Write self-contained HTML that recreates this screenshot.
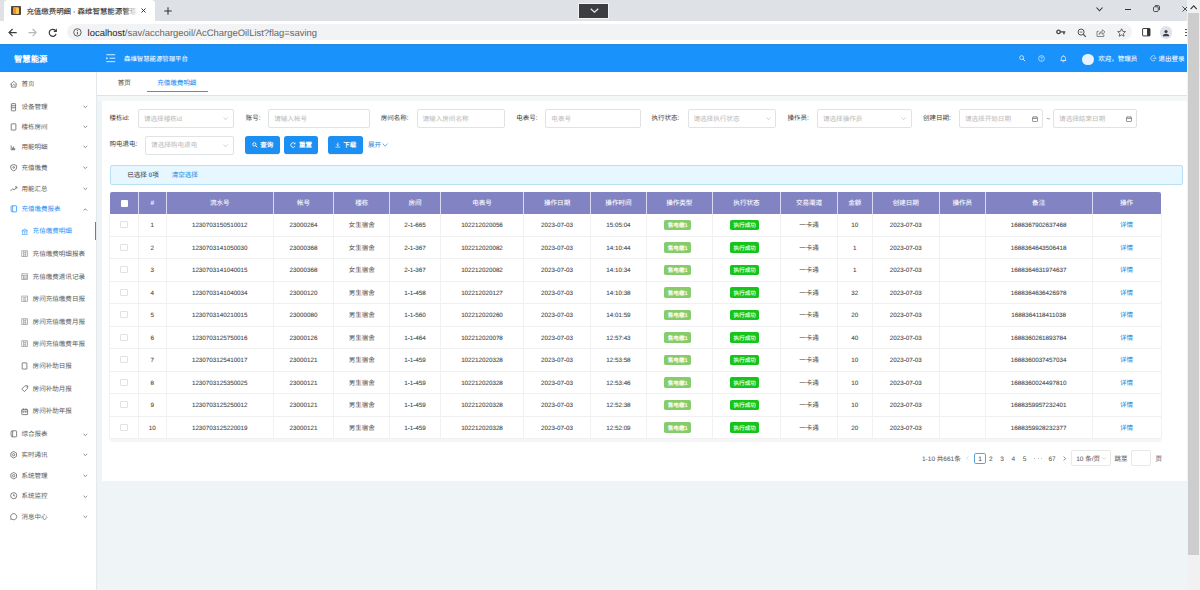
<!DOCTYPE html>
<html lang="zh-CN"><head><meta charset="utf-8"><title>充值缴费明细 · 森维智慧能源管理平台</title>
<style>
*{box-sizing:border-box;margin:0;padding:0}
html,body{width:1200px;height:590px;overflow:hidden;background:#eff5f6}
body{font-family:"Liberation Sans",sans-serif;font-size:6.56px;color:#555;position:relative;line-height:1;text-rendering:geometricPrecision}
.abs{position:absolute}
.t{line-height:10px;height:10px;white-space:nowrap}
svg{position:absolute;overflow:visible}
.ip{border:0.6px solid #e0e3e5;border-radius:2px;background:#fff}
.btn{border-radius:2.8px;background:#1c8ff2;box-shadow:0 0.6px 1px rgba(0,0,0,.08)}
.vl{width:0.6px;background:#f1f1f1}
.hl{height:0.6px;background:#f0f0f0}
.tg{border-radius:1.8px}
.cb{width:7.4px;height:7.4px;border:0.6px solid #e2e2e2;border-radius:1px;background:#fff}
</style></head>
<body>
<div class="abs" style="left:0.00px;top:0.00px;width:1187.00px;height:20.70px;background:#dee1e6"></div>
<div class="abs" style="left:3.50px;top:0.00px;width:151.00px;height:20.70px;background:#fff;border-radius:4px 4px 0 0"></div>
<div class="abs" style="left:11.40px;top:6.10px;width:9.50px;height:9.00px;background:#4a4640;border-radius:1px"></div>
<div class="abs" style="left:13.20px;top:7.30px;width:5.80px;height:6.60px;background:#f7941d;border-radius:1.2px"></div>
<div class="abs" style="left:16.20px;top:7.60px;width:2.60px;height:6.00px;background:#ffc54d;border-radius:0 1.2px 1.2px 0"></div>
<div class="abs t" id="tabtitle" style="left:26.40px;top:7px;font-size:7.45px;color:#333;-webkit-text-stroke:0.1px;width:111px;overflow:hidden;">充值缴费明细 · 森维智慧能源管理平台</div>
<div class="abs" style="left:124.00px;top:3.00px;width:13.00px;height:14.00px;background:linear-gradient(90deg,rgba(255,255,255,0),#fff)"></div>
<svg style="left:141.20px;top:8.20px" width="5" height="5" viewBox="0 0 10 10"><path d="M1 1L9 9M9 1L1 9" stroke="#333" stroke-width="1.9" fill="none"/></svg>
<svg style="left:163.60px;top:6.70px" width="8" height="8" viewBox="0 0 14 14"><path d="M7 0.5V13.5M0.5 7H13.5" stroke="#333" stroke-width="1.8" fill="none"/></svg>
<div class="abs" style="left:577.50px;top:3.20px;width:31.40px;height:15.40px;background:#3b3d40;border:0.6px solid #f4f4f4"></div>
<svg style="left:589.50px;top:8.20px" width="9" height="5" viewBox="0 0 18 10"><path d="M1.5 1.5L9 8.5L16.5 1.5" stroke="#eee" stroke-width="2.2" fill="none"/></svg>
<svg style="left:1095.70px;top:7.00px" width="7" height="4.5" viewBox="0 0 14 9"><path d="M1 1L7 7.5L13 1" stroke="#333" stroke-width="2.2" fill="none"/></svg>
<div class="abs" style="left:1124.60px;top:8.70px;width:6.80px;height:1.00px;background:#333"></div>
<svg style="left:1153.00px;top:5.40px" width="7" height="7" viewBox="0 0 14 14"><rect x="1" y="3.5" width="9.5" height="9.5" rx="2" stroke="#333" stroke-width="1.7" fill="none"/><path d="M4 1.2H10.5Q13 1.2 13 3.8V10" stroke="#333" stroke-width="1.7" fill="none"/></svg>
<svg style="left:1181.60px;top:5.60px" width="6" height="6" viewBox="0 0 12 12"><path d="M1 1L11 11M11 1L1 11" stroke="#333" stroke-width="1.7" fill="none"/></svg>
<div class="abs" style="left:0.00px;top:20.70px;width:1187.00px;height:23.50px;background:#fff"></div>
<div class="abs" style="left:66.50px;top:24.20px;width:1065.00px;height:15.80px;border-radius:8px;background:#f1f3f4"></div>
<svg style="left:7.90px;top:28.00px" width="9.2" height="9.2" viewBox="0 0 18 18"><path d="M17 9H2.5M9 2L2 9L9 16" stroke="#3c3c3c" stroke-width="2.3" fill="none"/></svg>
<svg style="left:27.70px;top:28.00px" width="9.2" height="9.2" viewBox="0 0 18 18"><path d="M1 9H15.5M9 2L16 9L9 16" stroke="#b4b7bb" stroke-width="2.3" fill="none"/></svg>
<svg style="left:47.90px;top:27.90px" width="9.6" height="9.6" viewBox="0 0 18 18"><path d="M15.2 11.2A6.6 6.6 0 1 1 13.6 4.3" stroke="#3c3c3c" stroke-width="2.3" fill="none"/><path d="M16.6 1V7.6H10z" fill="#3c3c3c"/></svg>
<svg style="left:73.00px;top:28.00px" width="8.8" height="8.8" viewBox="0 0 18 18"><circle cx="9" cy="9" r="7.6" stroke="#444" stroke-width="1.7" fill="none"/><path d="M9 8V13.3" stroke="#444" stroke-width="1.9"/><circle cx="9" cy="5.3" r="1.15" fill="#444"/></svg>
<div class="abs t" id="url" style="left:87.60px;top:29px;font-size:9.45px;color:#222;">localhost<span style="color:#666">/sav/acchargeoil/AcChargeOilList?flag=saving</span></div>
<svg style="left:1056.30px;top:29.00px" width="9.8" height="5.8" viewBox="0 0 19 11"><circle cx="5" cy="5.5" r="3.4" stroke="#444" stroke-width="2.6" fill="none"/><path d="M9 4.2H18V6.8H16.8V10H14V6.8H9z" fill="#444"/></svg>
<svg style="left:1076.60px;top:28.00px" width="9.6" height="9.6" viewBox="0 0 20 20"><circle cx="8.5" cy="8.5" r="6.3" stroke="#4a4a4a" stroke-width="2" fill="none"/><path d="M13 13L18.5 18.5" stroke="#4a4a4a" stroke-width="2.3"/><path d="M5.5 8.5H11.5" stroke="#555" stroke-width="1.6"/></svg>
<svg style="left:1096.30px;top:27.60px" width="9.8" height="9.2" viewBox="0 0 20 19"><path d="M5.5 7H2V17.5H16V13" stroke="#666" stroke-width="1.6" fill="none"/><path d="M6 13.5Q7 7.5 13 7V3.5L18.5 8.2L13 13V9.8Q8.5 10 6 13.5z" stroke="#666" stroke-width="1.5" fill="none" stroke-linejoin="round"/></svg>
<svg style="left:1116.80px;top:28.00px" width="9.2" height="8.8" viewBox="0 0 20 19"><path d="M10 1.6L12.5 7.2L18.6 7.8L14 11.9L15.3 17.9L10 14.8L4.7 17.9L6 11.9L1.4 7.8L7.5 7.2z" stroke="#444" stroke-width="1.7" fill="none" stroke-linejoin="round"/></svg>
<svg style="left:1141.60px;top:28.20px" width="8.6" height="8.4" viewBox="0 0 17 17"><rect x="1" y="1" width="15" height="15" rx="1" stroke="#333" stroke-width="1.9" fill="none"/><rect x="10" y="1" width="6" height="15" fill="#333"/></svg>
<div class="abs" style="left:1159.70px;top:26.00px;width:12.80px;height:12.80px;border-radius:6.4px;background:#dfe3ea"></div>
<svg style="left:1162.10px;top:28.60px" width="8" height="8" viewBox="0 0 16 16"><circle cx="8" cy="5" r="3.2" fill="#3c4043"/><path d="M1.5 14.5Q1.5 9.5 8 9.5T14.5 14.5z" fill="#3c4043"/></svg>
<div class="abs" style="left:1185.20px;top:28.60px;width:1.80px;height:1.60px;background:#444;border-radius:1px"></div>
<div class="abs" style="left:1185.20px;top:31.70px;width:1.80px;height:1.60px;background:#444;border-radius:1px"></div>
<div class="abs" style="left:1185.20px;top:34.80px;width:1.80px;height:1.60px;background:#444;border-radius:1px"></div>
<div class="abs" style="left:0.00px;top:44.00px;width:1187.00px;height:28.00px;background:#1992fc"></div>
<div class="abs" style="left:0.00px;top:44.00px;width:1187.00px;height:1.00px;background:#2a8ade"></div>
<div class="abs t" id="logo" style="left:14.00px;top:54px;font-size:8.4px;color:#fff;font-weight:bold;">智慧能源</div>
<svg style="left:105.50px;top:54.00px" width="9.5" height="8.4" viewBox="0 0 19 17"><path d="M0.5 1.5H18.5M7 8.5H18.5M0.5 15.5H18.5" stroke="#fff" stroke-width="1.7" fill="none"/><path d="M0.5 6L4 8.5L0.5 11z" fill="#fff"/></svg>
<div class="abs t" id="plat" style="left:124.00px;top:55px;font-size:6.4px;color:#fff;-webkit-text-stroke:0.05px;">森维智慧能源管理平台</div>
<svg style="left:1018.50px;top:55.30px" width="6.6" height="6.6" viewBox="0 0 14 14"><circle cx="5.6" cy="5.6" r="4.1" stroke="#e6f3ff" stroke-width="1.7" fill="none"/><path d="M8.6 8.6L13 13" stroke="#e6f3ff" stroke-width="2"/></svg>
<svg style="left:1038.00px;top:55.00px" width="7" height="7" viewBox="0 0 14 14"><circle cx="7" cy="7" r="5.8" stroke="#e6f3ff" stroke-width="1.3" fill="none"/><path d="M5.2 5.6Q5.2 3.8 7 3.8T8.8 5.6Q8.8 6.6 7 7.4V8.6" stroke="#e6f3ff" stroke-width="1.2" fill="none"/><circle cx="7" cy="10.4" r="0.8" fill="#e6f3ff"/></svg>
<svg style="left:1060.20px;top:54.60px" width="6.8" height="7.6" viewBox="0 0 14 16"><path d="M2.5 11.5V7Q2.5 2.5 7 2.5T11.5 7V11.5z" stroke="#e6f3ff" stroke-width="1.5" fill="none"/><path d="M1 11.8H13M7 0.5V2.5M5.4 14.3H8.6" stroke="#e6f3ff" stroke-width="1.5"/></svg>
<div class="abs" style="left:1082.20px;top:53.50px;width:11.60px;height:11.60px;border-radius:6px;background:#e8f3fd"></div>
<div class="abs t" style="left:1098.30px;top:55px;font-size:6.5px;color:#fff;-webkit-text-stroke:0.05px;">欢迎，管理员</div>
<svg style="left:1150.00px;top:55.20px" width="6.6" height="6.6" viewBox="0 0 14 14"><path d="M11.2 3A5.6 5.6 0 1 0 11.2 11" stroke="#e6f3ff" stroke-width="1.4" fill="none"/><path d="M6 7H13M11 5L13 7L11 9" stroke="#e6f3ff" stroke-width="1.3" fill="none"/></svg>
<div class="abs t" style="left:1158.50px;top:55px;font-size:6.5px;color:#fff;-webkit-text-stroke:0.05px;">退出登录</div>
<div class="abs" style="left:0.00px;top:72.00px;width:96.40px;height:518.00px;background:#fff;box-shadow:0.5px 0 1.6px rgba(0,21,41,.10)"></div>
<svg style="left:9.50px;top:79.80px" width="7.4" height="7.4" viewBox="0 0 14 14"><path d="M0.5 8.5L7 2.5L13.5 8.5M2.6 7.5V13.5H11.4V7.5M4.5 10.5L7 8.2L9.5 10.5" stroke="#5a5a5a" stroke-width="1.4" fill="none"/></svg>
<div class="abs t" style="left:21.50px;top:80px;font-size:6.5px;color:#5a5a5a;">首页</div>
<svg style="left:9.50px;top:102.70px" width="7.4" height="7.4" viewBox="0 0 14 14"><rect x="2.6" y="1.2" width="8" height="13.6" rx="0.8" stroke="#5a5a5a" stroke-width="1.4" fill="none" stroke="#888"/><path d="M2.6 5.2H10.6M2.6 9H10.6" stroke="#5a5a5a" stroke-width="1.4" fill="none" stroke="#888"/></svg>
<div class="abs t" style="left:21.50px;top:103px;font-size:6.5px;color:#5a5a5a;">设备管理</div>
<svg style="left:82.90px;top:104.90px" width="4.6" height="3.4" viewBox="0 0 9 6.5"><path d="M1 1.5L4.5 5L8 1.5" stroke="#666" stroke-width="1.5" fill="none"/></svg>
<svg style="left:9.50px;top:123.10px" width="7.4" height="7.4" viewBox="0 0 14 14"><rect x="2.3" y="1.6" width="8.8" height="11.8" rx="0.6" stroke="#5a5a5a" stroke-width="1.4" fill="none" stroke-width="1.7"/></svg>
<div class="abs t" style="left:21.50px;top:123px;font-size:6.5px;color:#5a5a5a;">楼栋房间</div>
<svg style="left:82.90px;top:125.30px" width="4.6" height="3.4" viewBox="0 0 9 6.5"><path d="M1 1.5L4.5 5L8 1.5" stroke="#666" stroke-width="1.5" fill="none"/></svg>
<svg style="left:9.50px;top:143.20px" width="7.4" height="7.4" viewBox="0 0 14 14"><path d="M2.2 4.5V12.8H9.6M4.8 12.5V8.5M6.8 12.5V6.5M8.8 12.5V9.5" stroke="#5a5a5a" stroke-width="1.4" fill="none" stroke="#999" stroke-width="1.2"/></svg>
<div class="abs t" style="left:21.50px;top:143px;font-size:6.5px;color:#5a5a5a;">用能明细</div>
<svg style="left:82.90px;top:145.40px" width="4.6" height="3.4" viewBox="0 0 9 6.5"><path d="M1 1.5L4.5 5L8 1.5" stroke="#666" stroke-width="1.5" fill="none"/></svg>
<svg style="left:9.50px;top:164.00px" width="7.4" height="7.4" viewBox="0 0 14 14"><path d="M7 1L12.5 3V7.5Q12.5 11 7 13.2Q1.5 11 1.5 7.5V3z" stroke="#5a5a5a" stroke-width="1.4" fill="none"/><circle cx="7" cy="6.5" r="1.6" stroke="#5a5a5a" stroke-width="1.4" fill="none"/></svg>
<div class="abs t" style="left:21.50px;top:164px;font-size:6.5px;color:#5a5a5a;">充值缴费</div>
<svg style="left:82.90px;top:166.20px" width="4.6" height="3.4" viewBox="0 0 9 6.5"><path d="M1 1.5L4.5 5L8 1.5" stroke="#666" stroke-width="1.5" fill="none"/></svg>
<svg style="left:9.50px;top:184.60px" width="7.4" height="7.4" viewBox="0 0 14 14"><path d="M1 11.5L5 7L8 9.5L12.5 4M9.5 3.5H13V7" stroke="#5a5a5a" stroke-width="1.4" fill="none"/></svg>
<div class="abs t" style="left:21.50px;top:185px;font-size:6.5px;color:#5a5a5a;">用能汇总</div>
<svg style="left:82.90px;top:186.80px" width="4.6" height="3.4" viewBox="0 0 9 6.5"><path d="M1 1.5L4.5 5L8 1.5" stroke="#666" stroke-width="1.5" fill="none"/></svg>
<svg style="left:9.50px;top:205.30px" width="7.4" height="7.4" viewBox="0 0 14 14"><path d="M4.5 1.5H11.5Q12.5 1.5 12.5 2.5V12Q12.5 13 11.5 13H4.5Q2 13 2 9V4Q2 1.5 4.5 1.5zM5 1.5V13" stroke="#1a8ff5" stroke-width="1.4" fill="none" stroke-width="1.8"/></svg>
<div class="abs t" style="left:21.50px;top:205px;font-size:6.5px;color:#1a8ff5;">充值缴费报表</div>
<svg style="left:82.90px;top:207.50px" width="4.6" height="3.4" viewBox="0 0 9 6.5"><path d="M1 5L4.5 1.5L8 5" stroke="#666" stroke-width="1.5" fill="none"/></svg>
<svg style="left:20.90px;top:227.50px" width="7.4" height="7.4" viewBox="0 0 14 14"><path d="M1.5 5.5L7 2L12.5 5.5zM3 6.5V10.5M7 6.5V10.5M11 6.5V10.5M1.5 12H12.5" stroke="#3c9cf2" stroke-width="1.4" fill="none" stroke-width="1.2"/></svg>
<div class="abs t" style="left:32.60px;top:227px;font-size:6.56px;color:#1a8ff5;">充值缴费明细</div>
<svg style="left:20.90px;top:250.10px" width="7.4" height="7.4" viewBox="0 0 14 14"><rect x="1.5" y="1.5" width="11" height="11" stroke="#999" stroke-width="1.4" fill="none" stroke-width="1.1"/><path d="M5 1.5V12.5M9 1.5V12.5M5 5H9M5 9H9" stroke="#999" stroke-width="1.4" fill="none" stroke-width="1.1"/></svg>
<div class="abs t" style="left:32.60px;top:250px;font-size:6.56px;color:#5a5a5a;">充值缴费明细报表</div>
<svg style="left:20.90px;top:273.00px" width="7.4" height="7.4" viewBox="0 0 14 14"><rect x="1.5" y="1.5" width="11" height="11" stroke="#999" stroke-width="1.4" fill="none" stroke-width="1.1"/><path d="M1.5 4.5H12.5M4.5 4.5V12.5M4.5 7.5H12.5M4.5 10H12.5" stroke="#999" stroke-width="1.4" fill="none" stroke-width="1.1"/></svg>
<div class="abs t" style="left:32.60px;top:273px;font-size:6.56px;color:#5a5a5a;">充值缴费退讯记录</div>
<svg style="left:20.90px;top:295.30px" width="7.4" height="7.4" viewBox="0 0 14 14"><rect x="1.5" y="2" width="11" height="10" stroke="#999" stroke-width="1.4" fill="none" stroke-width="1.1"/><path d="M4 5H10M4 7.5H10M4 10H10" stroke="#999" stroke-width="1.4" fill="none" stroke-width="1"/></svg>
<div class="abs t" style="left:32.60px;top:295px;font-size:6.56px;color:#5a5a5a;">房间充值缴费日报</div>
<svg style="left:20.90px;top:317.80px" width="7.4" height="7.4" viewBox="0 0 14 14"><rect x="1.5" y="1.5" width="11" height="11" stroke="#999" stroke-width="1.4" fill="none" stroke-width="1.1"/><path d="M5 1.5V12.5M9 1.5V12.5M5 5H9M5 9H9" stroke="#999" stroke-width="1.4" fill="none" stroke-width="1.1"/></svg>
<div class="abs t" style="left:32.60px;top:318px;font-size:6.56px;color:#5a5a5a;">房间充值缴费月报</div>
<svg style="left:20.90px;top:340.10px" width="7.4" height="7.4" viewBox="0 0 14 14"><rect x="1.5" y="1.5" width="11" height="11" stroke="#999" stroke-width="1.4" fill="none" stroke-width="1.1"/><path d="M5 1.5V12.5M9 1.5V12.5M5 5H9M5 9H9" stroke="#999" stroke-width="1.4" fill="none" stroke-width="1.1"/></svg>
<div class="abs t" style="left:32.60px;top:340px;font-size:6.56px;color:#5a5a5a;">房间充值缴费年报</div>
<svg style="left:20.90px;top:362.40px" width="7.4" height="7.4" viewBox="0 0 14 14"><rect x="2.3" y="1.6" width="8.8" height="11.8" rx="0.6" stroke="#5a5a5a" stroke-width="1.4" fill="none" stroke-width="1.7"/></svg>
<div class="abs t" style="left:32.60px;top:362px;font-size:6.56px;color:#5a5a5a;">房间补助日报</div>
<svg style="left:20.90px;top:385.20px" width="7.4" height="7.4" viewBox="0 0 14 14"><path d="M7.5 1.5H12.5V6.5L6.5 12.5L1.5 7.5z" stroke="#5a5a5a" stroke-width="1.4" fill="none"/><circle cx="10" cy="4" r="0.9" fill="#5a5a5a"/></svg>
<div class="abs t" style="left:32.60px;top:385px;font-size:6.56px;color:#5a5a5a;">房间补助月报</div>
<svg style="left:20.90px;top:407.50px" width="7.4" height="7.4" viewBox="0 0 14 14"><rect x="1.5" y="2.5" width="11" height="10" rx="1" stroke="#5a5a5a" stroke-width="1.4" fill="none"/><path d="M1.5 6H12.5M4.5 1V4M9.5 1V4M4 8.5H6M8 8.5H10" stroke="#5a5a5a" stroke-width="1.4" fill="none"/></svg>
<div class="abs t" style="left:32.60px;top:407px;font-size:6.56px;color:#5a5a5a;">房间补助年报</div>
<div class="abs" style="left:95.00px;top:221.60px;width:1.40px;height:18.80px;background:#2a8de6"></div>
<svg style="left:9.50px;top:430.40px" width="7.4" height="7.4" viewBox="0 0 14 14"><path d="M4.5 1.5H11.5Q12.5 1.5 12.5 2.5V12Q12.5 13 11.5 13H4.5Q2 13 2 9V4Q2 1.5 4.5 1.5zM5 1.5V13" stroke="#5a5a5a" stroke-width="1.4" fill="none" stroke-width="1.8"/></svg>
<div class="abs t" style="left:21.50px;top:430px;font-size:6.5px;color:#5a5a5a;">综合报表</div>
<svg style="left:82.90px;top:432.60px" width="4.6" height="3.4" viewBox="0 0 9 6.5"><path d="M1 1.5L4.5 5L8 1.5" stroke="#666" stroke-width="1.5" fill="none"/></svg>
<svg style="left:9.50px;top:451.00px" width="7.4" height="7.4" viewBox="0 0 14 14"><path d="M7 0.8L12.4 3.9V10.1L7 13.2L1.6 10.1V3.9z" stroke="#5a5a5a" stroke-width="1.4" fill="none"/><circle cx="7" cy="7" r="2.2" stroke="#5a5a5a" stroke-width="1.4" fill="none"/></svg>
<div class="abs t" style="left:21.50px;top:451px;font-size:6.5px;color:#5a5a5a;">实时通讯</div>
<svg style="left:82.90px;top:453.20px" width="4.6" height="3.4" viewBox="0 0 9 6.5"><path d="M1 1.5L4.5 5L8 1.5" stroke="#666" stroke-width="1.5" fill="none"/></svg>
<svg style="left:9.50px;top:471.70px" width="7.4" height="7.4" viewBox="0 0 14 14"><path d="M7 0.8L12.4 3.9V10.1L7 13.2L1.6 10.1V3.9z" stroke="#5a5a5a" stroke-width="1.4" fill="none"/><circle cx="7" cy="7" r="2.2" stroke="#5a5a5a" stroke-width="1.4" fill="none"/></svg>
<div class="abs t" style="left:21.50px;top:472px;font-size:6.5px;color:#5a5a5a;">系统管理</div>
<svg style="left:82.90px;top:473.90px" width="4.6" height="3.4" viewBox="0 0 9 6.5"><path d="M1 1.5L4.5 5L8 1.5" stroke="#666" stroke-width="1.5" fill="none"/></svg>
<svg style="left:9.50px;top:492.30px" width="7.4" height="7.4" viewBox="0 0 14 14"><circle cx="7" cy="7" r="5.8" stroke="#5a5a5a" stroke-width="1.4" fill="none"/><path d="M7 3.6V7.4H9.6" stroke="#5a5a5a" stroke-width="1.4" fill="none"/></svg>
<div class="abs t" style="left:21.50px;top:492px;font-size:6.5px;color:#5a5a5a;">系统监控</div>
<svg style="left:82.90px;top:494.50px" width="4.6" height="3.4" viewBox="0 0 9 6.5"><path d="M1 1.5L4.5 5L8 1.5" stroke="#666" stroke-width="1.5" fill="none"/></svg>
<svg style="left:9.50px;top:513.00px" width="7.4" height="7.4" viewBox="0 0 14 14"><path d="M7 1.2A5.8 5.8 0 1 1 3.2 11.4L1.4 12.4L2 10A5.8 5.8 0 0 1 7 1.2z" stroke="#5a5a5a" stroke-width="1.4" fill="none"/></svg>
<div class="abs t" style="left:21.50px;top:513px;font-size:6.5px;color:#5a5a5a;">消息中心</div>
<svg style="left:82.90px;top:515.20px" width="4.6" height="3.4" viewBox="0 0 9 6.5"><path d="M1 1.5L4.5 5L8 1.5" stroke="#666" stroke-width="1.5" fill="none"/></svg>
<div class="abs" style="left:97.00px;top:95.00px;width:1090.00px;height:6.00px;background:#f4f7f8"></div>
<div class="abs" style="left:97.00px;top:72.00px;width:1090.00px;height:23.50px;background:#fff;border-bottom:0.7px solid #dde3e6"></div>
<div class="abs" style="left:96.30px;top:72.00px;width:0.80px;height:23.50px;background:#e3e8ec"></div>
<div class="abs t" style="left:117.70px;top:79px;font-size:6.5px;color:#555;-webkit-text-stroke:0.05px;">首页</div>
<div class="abs t" style="left:157.30px;top:79px;font-size:6.5px;color:#1a8ff5;-webkit-text-stroke:0.05px;">充值缴费明细</div>
<div class="abs" style="left:146.80px;top:91.00px;width:60.80px;height:1.40px;background:#3f94d6"></div>
<div class="abs" style="left:101.90px;top:100.80px;width:1086.00px;height:380.00px;background:#fff"></div>
<div class="abs t" style="left:109.50px;top:114px;font-size:6.5px;color:#3a3a3a;">楼栋id:</div>
<div class="abs ip" style="left:138.00px;top:109.20px;width:95.80px;height:18.6px"></div>
<div class="abs t" style="left:143.90px;top:115px;font-size:6.6px;color:#bfbfbf;-webkit-text-stroke:0.05px;">请选择楼栋id</div>
<svg style="left:223.20px;top:117.10px" width="5.2" height="3.3" viewBox="0 0 10 6.5"><path d="M1 1L5 5.2L9 1" stroke="#b8b8b8" stroke-width="1.3" fill="none"/></svg>
<div class="abs t" style="left:245.80px;top:114px;font-size:6.5px;color:#3a3a3a;">账号:</div>
<div class="abs ip" style="left:268.30px;top:109.20px;width:101.40px;height:18.6px"></div>
<div class="abs t" style="left:274.20px;top:115px;font-size:6.6px;color:#bfbfbf;-webkit-text-stroke:0.05px;">请输入帐号</div>
<div class="abs t" style="left:380.80px;top:114px;font-size:6.5px;color:#3a3a3a;">房间名称:</div>
<div class="abs ip" style="left:416.60px;top:109.20px;width:88.20px;height:18.6px"></div>
<div class="abs t" style="left:422.50px;top:115px;font-size:6.6px;color:#bfbfbf;-webkit-text-stroke:0.05px;">请输入房间名称</div>
<div class="abs t" style="left:516.30px;top:114px;font-size:6.5px;color:#3a3a3a;">电表号:</div>
<div class="abs ip" style="left:545.40px;top:109.20px;width:95.40px;height:18.6px"></div>
<div class="abs t" style="left:551.30px;top:115px;font-size:6.6px;color:#bfbfbf;-webkit-text-stroke:0.05px;">电表号</div>
<div class="abs t" style="left:651.50px;top:114px;font-size:6.5px;color:#3a3a3a;">执行状态:</div>
<div class="abs ip" style="left:687.50px;top:109.20px;width:88.80px;height:18.6px"></div>
<div class="abs t" style="left:693.40px;top:115px;font-size:6.6px;color:#bfbfbf;-webkit-text-stroke:0.05px;">请选择执行状态</div>
<svg style="left:765.70px;top:117.10px" width="5.2" height="3.3" viewBox="0 0 10 6.5"><path d="M1 1L5 5.2L9 1" stroke="#b8b8b8" stroke-width="1.3" fill="none"/></svg>
<div class="abs t" style="left:787.50px;top:114px;font-size:6.5px;color:#3a3a3a;">操作员:</div>
<div class="abs ip" style="left:817.00px;top:109.20px;width:94.90px;height:18.6px"></div>
<div class="abs t" style="left:822.90px;top:115px;font-size:6.6px;color:#bfbfbf;-webkit-text-stroke:0.05px;">请选择操作员</div>
<svg style="left:901.30px;top:117.10px" width="5.2" height="3.3" viewBox="0 0 10 6.5"><path d="M1 1L5 5.2L9 1" stroke="#b8b8b8" stroke-width="1.3" fill="none"/></svg>
<div class="abs t" style="left:923.00px;top:114px;font-size:6.5px;color:#3a3a3a;">创建日期:</div>
<div class="abs ip" style="left:959.00px;top:109.20px;width:84.40px;height:18.6px"></div>
<div class="abs t" style="left:964.90px;top:115px;font-size:6.6px;color:#bfbfbf;-webkit-text-stroke:0.05px;">请选择开始日期</div>
<svg style="left:1031.50px;top:116.10px" width="6" height="6" viewBox="0 0 12 12"><rect x="1" y="2" width="10" height="9" rx="1" stroke="#666" stroke-width="1.3" fill="none"/><path d="M1 5H11M3.5 0.5V3M8.5 0.5V3" stroke="#666" stroke-width="1.3"/></svg>
<div class="abs t" style="left:1046.60px;top:115px;font-size:6.5px;color:#555;-webkit-text-stroke:0.05px;">~</div>
<div class="abs ip" style="left:1053.20px;top:109.20px;width:84.20px;height:18.6px"></div>
<div class="abs t" style="left:1059.10px;top:115px;font-size:6.6px;color:#bfbfbf;-webkit-text-stroke:0.05px;">请选择结束日期</div>
<svg style="left:1125.50px;top:116.10px" width="6" height="6" viewBox="0 0 12 12"><rect x="1" y="2" width="10" height="9" rx="1" stroke="#666" stroke-width="1.3" fill="none"/><path d="M1 5H11M3.5 0.5V3M8.5 0.5V3" stroke="#666" stroke-width="1.3"/></svg>
<div class="abs t" style="left:109.50px;top:140px;font-size:6.5px;color:#3a3a3a;">购电退电:</div>
<div class="abs ip" style="left:145.20px;top:136.00px;width:88.60px;height:18.6px"></div>
<div class="abs t" style="left:151.10px;top:141px;font-size:6.6px;color:#bfbfbf;-webkit-text-stroke:0.05px;">请选择购电退电</div>
<svg style="left:223.20px;top:143.90px" width="5.2" height="3.3" viewBox="0 0 10 6.5"><path d="M1 1L5 5.2L9 1" stroke="#b8b8b8" stroke-width="1.3" fill="none"/></svg>
<div class="abs btn" style="left:245.00px;top:135.8px;width:34.60px;height:18.4px"></div>
<svg style="left:252.3px;top:141.8px" width="5.6" height="5.6" viewBox="0 0 12 12"><circle cx="5" cy="5" r="3.5" stroke="#fff" stroke-width="1.9" fill="none"/><path d="M7.6 7.6L11.2 11.2" stroke="#fff" stroke-width="2.1"/></svg>
<div class="abs t" style="left:260.30px;top:141px;font-size:6.5px;color:#fff;font-weight:bold;">查询</div>
<div class="abs btn" style="left:283.70px;top:135.8px;width:34.20px;height:18.4px"></div>
<svg style="left:290.4px;top:141.7px" width="6" height="6" viewBox="0 0 12 12"><path d="M10.2 8.2A4.6 4.6 0 1 1 9.6 3" stroke="#fff" stroke-width="1.7" fill="none"/><path d="M10.8 0.6V4.4H7z" fill="#fff"/></svg>
<div class="abs t" style="left:299.00px;top:141px;font-size:6.5px;color:#fff;font-weight:bold;">重置</div>
<div class="abs btn" style="left:328.00px;top:135.8px;width:34.60px;height:18.4px"></div>
<svg style="left:335.3px;top:141.9px" width="5.6" height="5.8" viewBox="0 0 12 12"><path d="M6 0.8V7.6M3.2 5.2L6 8L8.8 5.2M1 10.8H11" stroke="#fff" stroke-width="1.5" fill="none"/></svg>
<div class="abs t" style="left:343.30px;top:141px;font-size:6.5px;color:#fff;font-weight:bold;">下载</div>
<div class="abs t" style="left:368.00px;top:141px;font-size:6.5px;color:#2b8fe0;-webkit-text-stroke:0.05px;">展开</div>
<svg style="left:382.20px;top:142.60px" width="6.2" height="3.9" viewBox="0 0 11 7"><path d="M1 1L5.5 5.8L10 1" stroke="#2b8fe0" stroke-width="1.3" fill="none"/></svg>
<div class="abs" style="left:109.50px;top:165.30px;width:1073.50px;height:19.50px;background:#e6f7ff;border:0.6px solid #b9dff4;border-radius:2px"></div>
<div class="abs t" style="left:127.30px;top:171px;font-size:6.5px;color:#4a4a4a;-webkit-text-stroke:0.05px;">已选择 <span style="color:#2b8fe0;font-weight:bold">0</span>项</div>
<div class="abs t" style="left:171.70px;top:171px;font-size:6.5px;color:#2b8fe0;-webkit-text-stroke:0.05px;">清空选择</div>
<div class="abs" style="left:109.50px;top:192.30px;width:1051.50px;height:21.40px;background:#8183c3;border-radius:2px 2px 0 0"></div>
<div class="abs t" style="left:138.30px;top:199px;font-size:6.56px;color:#fff;width:27.90px;text-align:center;-webkit-text-stroke:0.06px;">#</div>
<div class="abs" style="left:137.95px;top:192.30px;width:0.70px;height:21.40px;background:#d9daf1"></div>
<div class="abs t" style="left:166.20px;top:199px;font-size:6.56px;color:#fff;width:107.10px;text-align:center;-webkit-text-stroke:0.06px;">流水号</div>
<div class="abs" style="left:165.85px;top:192.30px;width:0.70px;height:21.40px;background:#d9daf1"></div>
<div class="abs t" style="left:273.30px;top:199px;font-size:6.56px;color:#fff;width:60.35px;text-align:center;-webkit-text-stroke:0.06px;">帐号</div>
<div class="abs" style="left:272.95px;top:192.30px;width:0.70px;height:21.40px;background:#d9daf1"></div>
<div class="abs t" style="left:333.65px;top:199px;font-size:6.56px;color:#fff;width:56.10px;text-align:center;-webkit-text-stroke:0.06px;">楼栋</div>
<div class="abs" style="left:333.30px;top:192.30px;width:0.70px;height:21.40px;background:#d9daf1"></div>
<div class="abs t" style="left:389.75px;top:199px;font-size:6.56px;color:#fff;width:50.55px;text-align:center;-webkit-text-stroke:0.06px;">房间</div>
<div class="abs" style="left:389.40px;top:192.30px;width:0.70px;height:21.40px;background:#d9daf1"></div>
<div class="abs t" style="left:440.30px;top:199px;font-size:6.56px;color:#fff;width:83.40px;text-align:center;-webkit-text-stroke:0.06px;">电表号</div>
<div class="abs" style="left:439.95px;top:192.30px;width:0.70px;height:21.40px;background:#d9daf1"></div>
<div class="abs t" style="left:523.70px;top:199px;font-size:6.56px;color:#fff;width:66.80px;text-align:center;-webkit-text-stroke:0.06px;">操作日期</div>
<div class="abs" style="left:523.35px;top:192.30px;width:0.70px;height:21.40px;background:#d9daf1"></div>
<div class="abs t" style="left:590.50px;top:199px;font-size:6.56px;color:#fff;width:55.90px;text-align:center;-webkit-text-stroke:0.06px;">操作时间</div>
<div class="abs" style="left:590.15px;top:192.30px;width:0.70px;height:21.40px;background:#d9daf1"></div>
<div class="abs t" style="left:646.40px;top:199px;font-size:6.56px;color:#fff;width:65.80px;text-align:center;-webkit-text-stroke:0.06px;">操作类型</div>
<div class="abs" style="left:646.05px;top:192.30px;width:0.70px;height:21.40px;background:#d9daf1"></div>
<div class="abs t" style="left:712.20px;top:199px;font-size:6.56px;color:#fff;width:68.50px;text-align:center;-webkit-text-stroke:0.06px;">执行状态</div>
<div class="abs" style="left:711.85px;top:192.30px;width:0.70px;height:21.40px;background:#d9daf1"></div>
<div class="abs t" style="left:780.70px;top:199px;font-size:6.56px;color:#fff;width:56.60px;text-align:center;-webkit-text-stroke:0.06px;">交易渠道</div>
<div class="abs" style="left:780.35px;top:192.30px;width:0.70px;height:21.40px;background:#d9daf1"></div>
<div class="abs t" style="left:837.30px;top:199px;font-size:6.56px;color:#fff;width:34.90px;text-align:center;-webkit-text-stroke:0.06px;">金额</div>
<div class="abs" style="left:836.95px;top:192.30px;width:0.70px;height:21.40px;background:#d9daf1"></div>
<div class="abs t" style="left:872.20px;top:199px;font-size:6.56px;color:#fff;width:67.10px;text-align:center;-webkit-text-stroke:0.06px;">创建日期</div>
<div class="abs" style="left:871.85px;top:192.30px;width:0.70px;height:21.40px;background:#d9daf1"></div>
<div class="abs t" style="left:939.30px;top:199px;font-size:6.56px;color:#fff;width:46.10px;text-align:center;-webkit-text-stroke:0.06px;">操作员</div>
<div class="abs" style="left:938.95px;top:192.30px;width:0.70px;height:21.40px;background:#d9daf1"></div>
<div class="abs t" style="left:985.40px;top:199px;font-size:6.56px;color:#fff;width:106.50px;text-align:center;-webkit-text-stroke:0.06px;">备注</div>
<div class="abs" style="left:985.05px;top:192.30px;width:0.70px;height:21.40px;background:#d9daf1"></div>
<div class="abs t" style="left:1091.90px;top:199px;font-size:6.56px;color:#fff;width:69.10px;text-align:center;-webkit-text-stroke:0.06px;">操作</div>
<div class="abs" style="left:1091.55px;top:192.30px;width:0.70px;height:21.40px;background:#d9daf1"></div>
<div class="abs" style="left:120.70px;top:199.50px;width:7.40px;height:7.40px;background:#fff;border-radius:1px"></div>
<div class="abs vl" style="left:109.20px;top:213.70px;height:225.00px"></div>
<div class="abs vl" style="left:138.00px;top:213.70px;height:225.00px"></div>
<div class="abs vl" style="left:165.90px;top:213.70px;height:225.00px"></div>
<div class="abs vl" style="left:273.00px;top:213.70px;height:225.00px"></div>
<div class="abs vl" style="left:333.35px;top:213.70px;height:225.00px"></div>
<div class="abs vl" style="left:389.45px;top:213.70px;height:225.00px"></div>
<div class="abs vl" style="left:440.00px;top:213.70px;height:225.00px"></div>
<div class="abs vl" style="left:523.40px;top:213.70px;height:225.00px"></div>
<div class="abs vl" style="left:590.20px;top:213.70px;height:225.00px"></div>
<div class="abs vl" style="left:646.10px;top:213.70px;height:225.00px"></div>
<div class="abs vl" style="left:711.90px;top:213.70px;height:225.00px"></div>
<div class="abs vl" style="left:780.40px;top:213.70px;height:225.00px"></div>
<div class="abs vl" style="left:837.00px;top:213.70px;height:225.00px"></div>
<div class="abs vl" style="left:871.90px;top:213.70px;height:225.00px"></div>
<div class="abs vl" style="left:939.00px;top:213.70px;height:225.00px"></div>
<div class="abs vl" style="left:985.10px;top:213.70px;height:225.00px"></div>
<div class="abs vl" style="left:1091.60px;top:213.70px;height:225.00px"></div>
<div class="abs vl" style="left:1160.70px;top:213.70px;height:225.00px"></div>
<div class="abs hl" style="left:109.50px;top:235.90px;width:1051.50px"></div>
<div class="abs hl" style="left:109.50px;top:258.40px;width:1051.50px"></div>
<div class="abs hl" style="left:109.50px;top:280.90px;width:1051.50px"></div>
<div class="abs hl" style="left:109.50px;top:303.40px;width:1051.50px"></div>
<div class="abs hl" style="left:109.50px;top:325.90px;width:1051.50px"></div>
<div class="abs hl" style="left:109.50px;top:348.40px;width:1051.50px"></div>
<div class="abs hl" style="left:109.50px;top:370.90px;width:1051.50px"></div>
<div class="abs hl" style="left:109.50px;top:393.40px;width:1051.50px"></div>
<div class="abs hl" style="left:109.50px;top:415.90px;width:1051.50px"></div>
<div class="abs hl" style="left:109.50px;top:438.40px;width:1051.50px"></div>
<div class="abs cb" style="left:120.40px;top:221.05px"></div>
<div class="abs t" style="left:138.30px;top:221px;font-size:6.25px;color:#4a4a4a;width:27.90px;text-align:center;-webkit-text-stroke:0.1px;">1</div>
<div class="abs t" style="left:166.20px;top:221px;font-size:6.25px;color:#4a4a4a;width:107.10px;text-align:center;-webkit-text-stroke:0.1px;">1230703150510012</div>
<div class="abs t" style="left:273.30px;top:221px;font-size:6.25px;color:#4a4a4a;width:60.35px;text-align:center;-webkit-text-stroke:0.1px;">23000264</div>
<div class="abs t" style="left:333.65px;top:221px;font-size:6.5px;color:#4a4a4a;width:56.10px;text-align:center;">女生宿舍</div>
<div class="abs t" style="left:389.75px;top:221px;font-size:6.25px;color:#4a4a4a;width:50.55px;text-align:center;-webkit-text-stroke:0.1px;">2-1-665</div>
<div class="abs t" style="left:440.30px;top:221px;font-size:6.25px;color:#4a4a4a;width:83.40px;text-align:center;-webkit-text-stroke:0.1px;">102212020056</div>
<div class="abs t" style="left:523.70px;top:221px;font-size:6.25px;color:#4a4a4a;width:66.80px;text-align:center;-webkit-text-stroke:0.1px;">2023-07-03</div>
<div class="abs t" style="left:590.50px;top:221px;font-size:6.25px;color:#4a4a4a;width:55.90px;text-align:center;-webkit-text-stroke:0.1px;">15:05:04</div>
<div class="abs t" style="left:780.70px;top:221px;font-size:6.5px;color:#4a4a4a;width:56.60px;text-align:center;">一卡通</div>
<div class="abs t" style="left:837.30px;top:221px;font-size:6.25px;color:#4a4a4a;width:34.90px;text-align:center;-webkit-text-stroke:0.1px;">10</div>
<div class="abs t" style="left:872.20px;top:221px;font-size:6.25px;color:#4a4a4a;width:67.10px;text-align:center;-webkit-text-stroke:0.1px;">2023-07-03</div>
<div class="abs t" style="left:985.40px;top:221px;font-size:6.25px;color:#4a4a4a;width:106.50px;text-align:center;-webkit-text-stroke:0.1px;">1688367902637468</div>
<div class="abs tg" style="left:664px;top:219.90px;width:27.3px;height:10.5px;background:#87cc6c"></div>
<div class="abs t" style="left:664.00px;top:221px;font-size:5.6px;color:#fff;width:27.30px;text-align:center;font-weight:bold;">售电缴1</div>
<div class="abs tg" style="left:730px;top:219.90px;width:29.3px;height:10.5px;background:#16c41c"></div>
<div class="abs t" style="left:730.00px;top:221px;font-size:5.6px;color:#d8ffd8;width:29.30px;text-align:center;font-weight:bold;">执行成功</div>
<div class="abs t" style="left:1091.90px;top:221px;font-size:6.5px;color:#2b8fe0;width:69.10px;text-align:center;-webkit-text-stroke:0.05px;">详情</div>
<div class="abs cb" style="left:120.40px;top:243.55px"></div>
<div class="abs t" style="left:138.30px;top:244px;font-size:6.25px;color:#4a4a4a;width:27.90px;text-align:center;-webkit-text-stroke:0.1px;">2</div>
<div class="abs t" style="left:166.20px;top:244px;font-size:6.25px;color:#4a4a4a;width:107.10px;text-align:center;-webkit-text-stroke:0.1px;">1230703141050030</div>
<div class="abs t" style="left:273.30px;top:244px;font-size:6.25px;color:#4a4a4a;width:60.35px;text-align:center;-webkit-text-stroke:0.1px;">23000368</div>
<div class="abs t" style="left:333.65px;top:244px;font-size:6.5px;color:#4a4a4a;width:56.10px;text-align:center;">女生宿舍</div>
<div class="abs t" style="left:389.75px;top:244px;font-size:6.25px;color:#4a4a4a;width:50.55px;text-align:center;-webkit-text-stroke:0.1px;">2-1-367</div>
<div class="abs t" style="left:440.30px;top:244px;font-size:6.25px;color:#4a4a4a;width:83.40px;text-align:center;-webkit-text-stroke:0.1px;">102212020082</div>
<div class="abs t" style="left:523.70px;top:244px;font-size:6.25px;color:#4a4a4a;width:66.80px;text-align:center;-webkit-text-stroke:0.1px;">2023-07-03</div>
<div class="abs t" style="left:590.50px;top:244px;font-size:6.25px;color:#4a4a4a;width:55.90px;text-align:center;-webkit-text-stroke:0.1px;">14:10:44</div>
<div class="abs t" style="left:780.70px;top:244px;font-size:6.5px;color:#4a4a4a;width:56.60px;text-align:center;">一卡通</div>
<div class="abs t" style="left:837.30px;top:244px;font-size:6.25px;color:#4a4a4a;width:34.90px;text-align:center;-webkit-text-stroke:0.1px;">1</div>
<div class="abs t" style="left:872.20px;top:244px;font-size:6.25px;color:#4a4a4a;width:67.10px;text-align:center;-webkit-text-stroke:0.1px;">2023-07-03</div>
<div class="abs t" style="left:985.40px;top:244px;font-size:6.25px;color:#4a4a4a;width:106.50px;text-align:center;-webkit-text-stroke:0.1px;">1688364643506418</div>
<div class="abs tg" style="left:664px;top:242.40px;width:27.3px;height:10.5px;background:#87cc6c"></div>
<div class="abs t" style="left:664.00px;top:244px;font-size:5.6px;color:#fff;width:27.30px;text-align:center;font-weight:bold;">售电缴1</div>
<div class="abs tg" style="left:730px;top:242.40px;width:29.3px;height:10.5px;background:#16c41c"></div>
<div class="abs t" style="left:730.00px;top:244px;font-size:5.6px;color:#d8ffd8;width:29.30px;text-align:center;font-weight:bold;">执行成功</div>
<div class="abs t" style="left:1091.90px;top:244px;font-size:6.5px;color:#2b8fe0;width:69.10px;text-align:center;-webkit-text-stroke:0.05px;">详情</div>
<div class="abs cb" style="left:120.40px;top:266.05px"></div>
<div class="abs t" style="left:138.30px;top:266px;font-size:6.25px;color:#4a4a4a;width:27.90px;text-align:center;-webkit-text-stroke:0.1px;">3</div>
<div class="abs t" style="left:166.20px;top:266px;font-size:6.25px;color:#4a4a4a;width:107.10px;text-align:center;-webkit-text-stroke:0.1px;">1230703141040015</div>
<div class="abs t" style="left:273.30px;top:266px;font-size:6.25px;color:#4a4a4a;width:60.35px;text-align:center;-webkit-text-stroke:0.1px;">23000368</div>
<div class="abs t" style="left:333.65px;top:266px;font-size:6.5px;color:#4a4a4a;width:56.10px;text-align:center;">女生宿舍</div>
<div class="abs t" style="left:389.75px;top:266px;font-size:6.25px;color:#4a4a4a;width:50.55px;text-align:center;-webkit-text-stroke:0.1px;">2-1-367</div>
<div class="abs t" style="left:440.30px;top:266px;font-size:6.25px;color:#4a4a4a;width:83.40px;text-align:center;-webkit-text-stroke:0.1px;">102212020082</div>
<div class="abs t" style="left:523.70px;top:266px;font-size:6.25px;color:#4a4a4a;width:66.80px;text-align:center;-webkit-text-stroke:0.1px;">2023-07-03</div>
<div class="abs t" style="left:590.50px;top:266px;font-size:6.25px;color:#4a4a4a;width:55.90px;text-align:center;-webkit-text-stroke:0.1px;">14:10:34</div>
<div class="abs t" style="left:780.70px;top:266px;font-size:6.5px;color:#4a4a4a;width:56.60px;text-align:center;">一卡通</div>
<div class="abs t" style="left:837.30px;top:266px;font-size:6.25px;color:#4a4a4a;width:34.90px;text-align:center;-webkit-text-stroke:0.1px;">1</div>
<div class="abs t" style="left:872.20px;top:266px;font-size:6.25px;color:#4a4a4a;width:67.10px;text-align:center;-webkit-text-stroke:0.1px;">2023-07-03</div>
<div class="abs t" style="left:985.40px;top:266px;font-size:6.25px;color:#4a4a4a;width:106.50px;text-align:center;-webkit-text-stroke:0.1px;">1688364631974637</div>
<div class="abs tg" style="left:664px;top:264.90px;width:27.3px;height:10.5px;background:#87cc6c"></div>
<div class="abs t" style="left:664.00px;top:266px;font-size:5.6px;color:#fff;width:27.30px;text-align:center;font-weight:bold;">售电缴1</div>
<div class="abs tg" style="left:730px;top:264.90px;width:29.3px;height:10.5px;background:#16c41c"></div>
<div class="abs t" style="left:730.00px;top:266px;font-size:5.6px;color:#d8ffd8;width:29.30px;text-align:center;font-weight:bold;">执行成功</div>
<div class="abs t" style="left:1091.90px;top:266px;font-size:6.5px;color:#2b8fe0;width:69.10px;text-align:center;-webkit-text-stroke:0.05px;">详情</div>
<div class="abs cb" style="left:120.40px;top:288.55px"></div>
<div class="abs t" style="left:138.30px;top:289px;font-size:6.25px;color:#4a4a4a;width:27.90px;text-align:center;-webkit-text-stroke:0.1px;">4</div>
<div class="abs t" style="left:166.20px;top:289px;font-size:6.25px;color:#4a4a4a;width:107.10px;text-align:center;-webkit-text-stroke:0.1px;">1230703141040034</div>
<div class="abs t" style="left:273.30px;top:289px;font-size:6.25px;color:#4a4a4a;width:60.35px;text-align:center;-webkit-text-stroke:0.1px;">23000120</div>
<div class="abs t" style="left:333.65px;top:289px;font-size:6.5px;color:#4a4a4a;width:56.10px;text-align:center;">男生宿舍</div>
<div class="abs t" style="left:389.75px;top:289px;font-size:6.25px;color:#4a4a4a;width:50.55px;text-align:center;-webkit-text-stroke:0.1px;">1-1-458</div>
<div class="abs t" style="left:440.30px;top:289px;font-size:6.25px;color:#4a4a4a;width:83.40px;text-align:center;-webkit-text-stroke:0.1px;">102212020127</div>
<div class="abs t" style="left:523.70px;top:289px;font-size:6.25px;color:#4a4a4a;width:66.80px;text-align:center;-webkit-text-stroke:0.1px;">2023-07-03</div>
<div class="abs t" style="left:590.50px;top:289px;font-size:6.25px;color:#4a4a4a;width:55.90px;text-align:center;-webkit-text-stroke:0.1px;">14:10:38</div>
<div class="abs t" style="left:780.70px;top:289px;font-size:6.5px;color:#4a4a4a;width:56.60px;text-align:center;">一卡通</div>
<div class="abs t" style="left:837.30px;top:289px;font-size:6.25px;color:#4a4a4a;width:34.90px;text-align:center;-webkit-text-stroke:0.1px;">32</div>
<div class="abs t" style="left:872.20px;top:289px;font-size:6.25px;color:#4a4a4a;width:67.10px;text-align:center;-webkit-text-stroke:0.1px;">2023-07-03</div>
<div class="abs t" style="left:985.40px;top:289px;font-size:6.25px;color:#4a4a4a;width:106.50px;text-align:center;-webkit-text-stroke:0.1px;">1688364636426978</div>
<div class="abs tg" style="left:664px;top:287.40px;width:27.3px;height:10.5px;background:#87cc6c"></div>
<div class="abs t" style="left:664.00px;top:289px;font-size:5.6px;color:#fff;width:27.30px;text-align:center;font-weight:bold;">售电缴1</div>
<div class="abs tg" style="left:730px;top:287.40px;width:29.3px;height:10.5px;background:#16c41c"></div>
<div class="abs t" style="left:730.00px;top:289px;font-size:5.6px;color:#d8ffd8;width:29.30px;text-align:center;font-weight:bold;">执行成功</div>
<div class="abs t" style="left:1091.90px;top:289px;font-size:6.5px;color:#2b8fe0;width:69.10px;text-align:center;-webkit-text-stroke:0.05px;">详情</div>
<div class="abs cb" style="left:120.40px;top:311.05px"></div>
<div class="abs t" style="left:138.30px;top:311px;font-size:6.25px;color:#4a4a4a;width:27.90px;text-align:center;-webkit-text-stroke:0.1px;">5</div>
<div class="abs t" style="left:166.20px;top:311px;font-size:6.25px;color:#4a4a4a;width:107.10px;text-align:center;-webkit-text-stroke:0.1px;">1230703140210015</div>
<div class="abs t" style="left:273.30px;top:311px;font-size:6.25px;color:#4a4a4a;width:60.35px;text-align:center;-webkit-text-stroke:0.1px;">23000080</div>
<div class="abs t" style="left:333.65px;top:311px;font-size:6.5px;color:#4a4a4a;width:56.10px;text-align:center;">男生宿舍</div>
<div class="abs t" style="left:389.75px;top:311px;font-size:6.25px;color:#4a4a4a;width:50.55px;text-align:center;-webkit-text-stroke:0.1px;">1-1-560</div>
<div class="abs t" style="left:440.30px;top:311px;font-size:6.25px;color:#4a4a4a;width:83.40px;text-align:center;-webkit-text-stroke:0.1px;">102212020260</div>
<div class="abs t" style="left:523.70px;top:311px;font-size:6.25px;color:#4a4a4a;width:66.80px;text-align:center;-webkit-text-stroke:0.1px;">2023-07-03</div>
<div class="abs t" style="left:590.50px;top:311px;font-size:6.25px;color:#4a4a4a;width:55.90px;text-align:center;-webkit-text-stroke:0.1px;">14:01:59</div>
<div class="abs t" style="left:780.70px;top:311px;font-size:6.5px;color:#4a4a4a;width:56.60px;text-align:center;">一卡通</div>
<div class="abs t" style="left:837.30px;top:311px;font-size:6.25px;color:#4a4a4a;width:34.90px;text-align:center;-webkit-text-stroke:0.1px;">20</div>
<div class="abs t" style="left:872.20px;top:311px;font-size:6.25px;color:#4a4a4a;width:67.10px;text-align:center;-webkit-text-stroke:0.1px;">2023-07-03</div>
<div class="abs t" style="left:985.40px;top:311px;font-size:6.25px;color:#4a4a4a;width:106.50px;text-align:center;-webkit-text-stroke:0.1px;">1688364118411038</div>
<div class="abs tg" style="left:664px;top:309.90px;width:27.3px;height:10.5px;background:#87cc6c"></div>
<div class="abs t" style="left:664.00px;top:311px;font-size:5.6px;color:#fff;width:27.30px;text-align:center;font-weight:bold;">售电缴1</div>
<div class="abs tg" style="left:730px;top:309.90px;width:29.3px;height:10.5px;background:#16c41c"></div>
<div class="abs t" style="left:730.00px;top:311px;font-size:5.6px;color:#d8ffd8;width:29.30px;text-align:center;font-weight:bold;">执行成功</div>
<div class="abs t" style="left:1091.90px;top:311px;font-size:6.5px;color:#2b8fe0;width:69.10px;text-align:center;-webkit-text-stroke:0.05px;">详情</div>
<div class="abs cb" style="left:120.40px;top:333.55px"></div>
<div class="abs t" style="left:138.30px;top:334px;font-size:6.25px;color:#4a4a4a;width:27.90px;text-align:center;-webkit-text-stroke:0.1px;">6</div>
<div class="abs t" style="left:166.20px;top:334px;font-size:6.25px;color:#4a4a4a;width:107.10px;text-align:center;-webkit-text-stroke:0.1px;">1230703125750016</div>
<div class="abs t" style="left:273.30px;top:334px;font-size:6.25px;color:#4a4a4a;width:60.35px;text-align:center;-webkit-text-stroke:0.1px;">23000126</div>
<div class="abs t" style="left:333.65px;top:334px;font-size:6.5px;color:#4a4a4a;width:56.10px;text-align:center;">男生宿舍</div>
<div class="abs t" style="left:389.75px;top:334px;font-size:6.25px;color:#4a4a4a;width:50.55px;text-align:center;-webkit-text-stroke:0.1px;">1-1-464</div>
<div class="abs t" style="left:440.30px;top:334px;font-size:6.25px;color:#4a4a4a;width:83.40px;text-align:center;-webkit-text-stroke:0.1px;">102212020078</div>
<div class="abs t" style="left:523.70px;top:334px;font-size:6.25px;color:#4a4a4a;width:66.80px;text-align:center;-webkit-text-stroke:0.1px;">2023-07-03</div>
<div class="abs t" style="left:590.50px;top:334px;font-size:6.25px;color:#4a4a4a;width:55.90px;text-align:center;-webkit-text-stroke:0.1px;">12:57:43</div>
<div class="abs t" style="left:780.70px;top:334px;font-size:6.5px;color:#4a4a4a;width:56.60px;text-align:center;">一卡通</div>
<div class="abs t" style="left:837.30px;top:334px;font-size:6.25px;color:#4a4a4a;width:34.90px;text-align:center;-webkit-text-stroke:0.1px;">40</div>
<div class="abs t" style="left:872.20px;top:334px;font-size:6.25px;color:#4a4a4a;width:67.10px;text-align:center;-webkit-text-stroke:0.1px;">2023-07-03</div>
<div class="abs t" style="left:985.40px;top:334px;font-size:6.25px;color:#4a4a4a;width:106.50px;text-align:center;-webkit-text-stroke:0.1px;">1688360261893784</div>
<div class="abs tg" style="left:664px;top:332.40px;width:27.3px;height:10.5px;background:#87cc6c"></div>
<div class="abs t" style="left:664.00px;top:334px;font-size:5.6px;color:#fff;width:27.30px;text-align:center;font-weight:bold;">售电缴1</div>
<div class="abs tg" style="left:730px;top:332.40px;width:29.3px;height:10.5px;background:#16c41c"></div>
<div class="abs t" style="left:730.00px;top:334px;font-size:5.6px;color:#d8ffd8;width:29.30px;text-align:center;font-weight:bold;">执行成功</div>
<div class="abs t" style="left:1091.90px;top:334px;font-size:6.5px;color:#2b8fe0;width:69.10px;text-align:center;-webkit-text-stroke:0.05px;">详情</div>
<div class="abs cb" style="left:120.40px;top:356.05px"></div>
<div class="abs t" style="left:138.30px;top:356px;font-size:6.25px;color:#4a4a4a;width:27.90px;text-align:center;-webkit-text-stroke:0.1px;">7</div>
<div class="abs t" style="left:166.20px;top:356px;font-size:6.25px;color:#4a4a4a;width:107.10px;text-align:center;-webkit-text-stroke:0.1px;">1230703125410017</div>
<div class="abs t" style="left:273.30px;top:356px;font-size:6.25px;color:#4a4a4a;width:60.35px;text-align:center;-webkit-text-stroke:0.1px;">23000121</div>
<div class="abs t" style="left:333.65px;top:356px;font-size:6.5px;color:#4a4a4a;width:56.10px;text-align:center;">男生宿舍</div>
<div class="abs t" style="left:389.75px;top:356px;font-size:6.25px;color:#4a4a4a;width:50.55px;text-align:center;-webkit-text-stroke:0.1px;">1-1-459</div>
<div class="abs t" style="left:440.30px;top:356px;font-size:6.25px;color:#4a4a4a;width:83.40px;text-align:center;-webkit-text-stroke:0.1px;">102212020328</div>
<div class="abs t" style="left:523.70px;top:356px;font-size:6.25px;color:#4a4a4a;width:66.80px;text-align:center;-webkit-text-stroke:0.1px;">2023-07-03</div>
<div class="abs t" style="left:590.50px;top:356px;font-size:6.25px;color:#4a4a4a;width:55.90px;text-align:center;-webkit-text-stroke:0.1px;">12:53:58</div>
<div class="abs t" style="left:780.70px;top:356px;font-size:6.5px;color:#4a4a4a;width:56.60px;text-align:center;">一卡通</div>
<div class="abs t" style="left:837.30px;top:356px;font-size:6.25px;color:#4a4a4a;width:34.90px;text-align:center;-webkit-text-stroke:0.1px;">10</div>
<div class="abs t" style="left:872.20px;top:356px;font-size:6.25px;color:#4a4a4a;width:67.10px;text-align:center;-webkit-text-stroke:0.1px;">2023-07-03</div>
<div class="abs t" style="left:985.40px;top:356px;font-size:6.25px;color:#4a4a4a;width:106.50px;text-align:center;-webkit-text-stroke:0.1px;">1688360037457034</div>
<div class="abs tg" style="left:664px;top:354.90px;width:27.3px;height:10.5px;background:#87cc6c"></div>
<div class="abs t" style="left:664.00px;top:356px;font-size:5.6px;color:#fff;width:27.30px;text-align:center;font-weight:bold;">售电缴1</div>
<div class="abs tg" style="left:730px;top:354.90px;width:29.3px;height:10.5px;background:#16c41c"></div>
<div class="abs t" style="left:730.00px;top:356px;font-size:5.6px;color:#d8ffd8;width:29.30px;text-align:center;font-weight:bold;">执行成功</div>
<div class="abs t" style="left:1091.90px;top:356px;font-size:6.5px;color:#2b8fe0;width:69.10px;text-align:center;-webkit-text-stroke:0.05px;">详情</div>
<div class="abs cb" style="left:120.40px;top:378.55px"></div>
<div class="abs t" style="left:138.30px;top:379px;font-size:6.25px;color:#4a4a4a;width:27.90px;text-align:center;-webkit-text-stroke:0.1px;">8</div>
<div class="abs t" style="left:166.20px;top:379px;font-size:6.25px;color:#4a4a4a;width:107.10px;text-align:center;-webkit-text-stroke:0.1px;">1230703125350025</div>
<div class="abs t" style="left:273.30px;top:379px;font-size:6.25px;color:#4a4a4a;width:60.35px;text-align:center;-webkit-text-stroke:0.1px;">23000121</div>
<div class="abs t" style="left:333.65px;top:379px;font-size:6.5px;color:#4a4a4a;width:56.10px;text-align:center;">男生宿舍</div>
<div class="abs t" style="left:389.75px;top:379px;font-size:6.25px;color:#4a4a4a;width:50.55px;text-align:center;-webkit-text-stroke:0.1px;">1-1-459</div>
<div class="abs t" style="left:440.30px;top:379px;font-size:6.25px;color:#4a4a4a;width:83.40px;text-align:center;-webkit-text-stroke:0.1px;">102212020328</div>
<div class="abs t" style="left:523.70px;top:379px;font-size:6.25px;color:#4a4a4a;width:66.80px;text-align:center;-webkit-text-stroke:0.1px;">2023-07-03</div>
<div class="abs t" style="left:590.50px;top:379px;font-size:6.25px;color:#4a4a4a;width:55.90px;text-align:center;-webkit-text-stroke:0.1px;">12:53:46</div>
<div class="abs t" style="left:780.70px;top:379px;font-size:6.5px;color:#4a4a4a;width:56.60px;text-align:center;">一卡通</div>
<div class="abs t" style="left:837.30px;top:379px;font-size:6.25px;color:#4a4a4a;width:34.90px;text-align:center;-webkit-text-stroke:0.1px;">10</div>
<div class="abs t" style="left:872.20px;top:379px;font-size:6.25px;color:#4a4a4a;width:67.10px;text-align:center;-webkit-text-stroke:0.1px;">2023-07-03</div>
<div class="abs t" style="left:985.40px;top:379px;font-size:6.25px;color:#4a4a4a;width:106.50px;text-align:center;-webkit-text-stroke:0.1px;">1688360024497810</div>
<div class="abs tg" style="left:664px;top:377.40px;width:27.3px;height:10.5px;background:#87cc6c"></div>
<div class="abs t" style="left:664.00px;top:379px;font-size:5.6px;color:#fff;width:27.30px;text-align:center;font-weight:bold;">售电缴1</div>
<div class="abs tg" style="left:730px;top:377.40px;width:29.3px;height:10.5px;background:#16c41c"></div>
<div class="abs t" style="left:730.00px;top:379px;font-size:5.6px;color:#d8ffd8;width:29.30px;text-align:center;font-weight:bold;">执行成功</div>
<div class="abs t" style="left:1091.90px;top:379px;font-size:6.5px;color:#2b8fe0;width:69.10px;text-align:center;-webkit-text-stroke:0.05px;">详情</div>
<div class="abs cb" style="left:120.40px;top:401.05px"></div>
<div class="abs t" style="left:138.30px;top:401px;font-size:6.25px;color:#4a4a4a;width:27.90px;text-align:center;-webkit-text-stroke:0.1px;">9</div>
<div class="abs t" style="left:166.20px;top:401px;font-size:6.25px;color:#4a4a4a;width:107.10px;text-align:center;-webkit-text-stroke:0.1px;">1230703125250012</div>
<div class="abs t" style="left:273.30px;top:401px;font-size:6.25px;color:#4a4a4a;width:60.35px;text-align:center;-webkit-text-stroke:0.1px;">23000121</div>
<div class="abs t" style="left:333.65px;top:401px;font-size:6.5px;color:#4a4a4a;width:56.10px;text-align:center;">男生宿舍</div>
<div class="abs t" style="left:389.75px;top:401px;font-size:6.25px;color:#4a4a4a;width:50.55px;text-align:center;-webkit-text-stroke:0.1px;">1-1-459</div>
<div class="abs t" style="left:440.30px;top:401px;font-size:6.25px;color:#4a4a4a;width:83.40px;text-align:center;-webkit-text-stroke:0.1px;">102212020328</div>
<div class="abs t" style="left:523.70px;top:401px;font-size:6.25px;color:#4a4a4a;width:66.80px;text-align:center;-webkit-text-stroke:0.1px;">2023-07-03</div>
<div class="abs t" style="left:590.50px;top:401px;font-size:6.25px;color:#4a4a4a;width:55.90px;text-align:center;-webkit-text-stroke:0.1px;">12:52:38</div>
<div class="abs t" style="left:780.70px;top:401px;font-size:6.5px;color:#4a4a4a;width:56.60px;text-align:center;">一卡通</div>
<div class="abs t" style="left:837.30px;top:401px;font-size:6.25px;color:#4a4a4a;width:34.90px;text-align:center;-webkit-text-stroke:0.1px;">10</div>
<div class="abs t" style="left:872.20px;top:401px;font-size:6.25px;color:#4a4a4a;width:67.10px;text-align:center;-webkit-text-stroke:0.1px;">2023-07-03</div>
<div class="abs t" style="left:985.40px;top:401px;font-size:6.25px;color:#4a4a4a;width:106.50px;text-align:center;-webkit-text-stroke:0.1px;">1688359957232401</div>
<div class="abs tg" style="left:664px;top:399.90px;width:27.3px;height:10.5px;background:#87cc6c"></div>
<div class="abs t" style="left:664.00px;top:401px;font-size:5.6px;color:#fff;width:27.30px;text-align:center;font-weight:bold;">售电缴1</div>
<div class="abs tg" style="left:730px;top:399.90px;width:29.3px;height:10.5px;background:#16c41c"></div>
<div class="abs t" style="left:730.00px;top:401px;font-size:5.6px;color:#d8ffd8;width:29.30px;text-align:center;font-weight:bold;">执行成功</div>
<div class="abs t" style="left:1091.90px;top:401px;font-size:6.5px;color:#2b8fe0;width:69.10px;text-align:center;-webkit-text-stroke:0.05px;">详情</div>
<div class="abs cb" style="left:120.40px;top:423.55px"></div>
<div class="abs t" style="left:138.30px;top:424px;font-size:6.25px;color:#4a4a4a;width:27.90px;text-align:center;-webkit-text-stroke:0.1px;">10</div>
<div class="abs t" style="left:166.20px;top:424px;font-size:6.25px;color:#4a4a4a;width:107.10px;text-align:center;-webkit-text-stroke:0.1px;">1230703125220019</div>
<div class="abs t" style="left:273.30px;top:424px;font-size:6.25px;color:#4a4a4a;width:60.35px;text-align:center;-webkit-text-stroke:0.1px;">23000121</div>
<div class="abs t" style="left:333.65px;top:424px;font-size:6.5px;color:#4a4a4a;width:56.10px;text-align:center;">男生宿舍</div>
<div class="abs t" style="left:389.75px;top:424px;font-size:6.25px;color:#4a4a4a;width:50.55px;text-align:center;-webkit-text-stroke:0.1px;">1-1-459</div>
<div class="abs t" style="left:440.30px;top:424px;font-size:6.25px;color:#4a4a4a;width:83.40px;text-align:center;-webkit-text-stroke:0.1px;">102212020328</div>
<div class="abs t" style="left:523.70px;top:424px;font-size:6.25px;color:#4a4a4a;width:66.80px;text-align:center;-webkit-text-stroke:0.1px;">2023-07-03</div>
<div class="abs t" style="left:590.50px;top:424px;font-size:6.25px;color:#4a4a4a;width:55.90px;text-align:center;-webkit-text-stroke:0.1px;">12:52:09</div>
<div class="abs t" style="left:780.70px;top:424px;font-size:6.5px;color:#4a4a4a;width:56.60px;text-align:center;">一卡通</div>
<div class="abs t" style="left:837.30px;top:424px;font-size:6.25px;color:#4a4a4a;width:34.90px;text-align:center;-webkit-text-stroke:0.1px;">20</div>
<div class="abs t" style="left:872.20px;top:424px;font-size:6.25px;color:#4a4a4a;width:67.10px;text-align:center;-webkit-text-stroke:0.1px;">2023-07-03</div>
<div class="abs t" style="left:985.40px;top:424px;font-size:6.25px;color:#4a4a4a;width:106.50px;text-align:center;-webkit-text-stroke:0.1px;">1688359928232377</div>
<div class="abs tg" style="left:664px;top:422.40px;width:27.3px;height:10.5px;background:#87cc6c"></div>
<div class="abs t" style="left:664.00px;top:424px;font-size:5.6px;color:#fff;width:27.30px;text-align:center;font-weight:bold;">售电缴1</div>
<div class="abs tg" style="left:730px;top:422.40px;width:29.3px;height:10.5px;background:#16c41c"></div>
<div class="abs t" style="left:730.00px;top:424px;font-size:5.6px;color:#d8ffd8;width:29.30px;text-align:center;font-weight:bold;">执行成功</div>
<div class="abs t" style="left:1091.90px;top:424px;font-size:6.5px;color:#2b8fe0;width:69.10px;text-align:center;-webkit-text-stroke:0.05px;">详情</div>
<div class="abs" style="left:109.50px;top:438.90px;width:1051.50px;height:3.40px;background:#f6f6f6"></div>
<div class="abs t" style="left:922.00px;top:455px;font-size:6.5px;color:#5a5a5a;-webkit-text-stroke:0.05px;">1-10 共661条</div>
<svg style="left:966.40px;top:456.20px" width="3" height="4.6" viewBox="0 0 6 10"><path d="M5 1L1.2 5L5 9" stroke="#c8c8c8" stroke-width="1.2" fill="none"/></svg>
<div class="abs" style="left:974.30px;top:452.50px;width:11.50px;height:11.60px;border:0.7px solid #5aa3d6;border-radius:1.8px;background:#fff"></div>
<div class="abs t" style="left:978.20px;top:455px;font-size:6.5px;color:#4a4a4a;-webkit-text-stroke:0.05px;">1</div>
<div class="abs t" style="left:989.00px;top:455px;font-size:6.5px;color:#5a5a5a;-webkit-text-stroke:0.05px;">2</div>
<div class="abs t" style="left:1000.20px;top:455px;font-size:6.5px;color:#5a5a5a;-webkit-text-stroke:0.05px;">3</div>
<div class="abs t" style="left:1011.50px;top:455px;font-size:6.5px;color:#5a5a5a;-webkit-text-stroke:0.05px;">4</div>
<div class="abs t" style="left:1022.70px;top:455px;font-size:6.5px;color:#5a5a5a;-webkit-text-stroke:0.05px;">5</div>
<div class="abs" style="left:1034.20px;top:457.70px;width:1.30px;height:1.30px;background:#a8a8a8;border-radius:1px"></div>
<div class="abs" style="left:1037.60px;top:457.70px;width:1.30px;height:1.30px;background:#a8a8a8;border-radius:1px"></div>
<div class="abs" style="left:1041.00px;top:457.70px;width:1.30px;height:1.30px;background:#a8a8a8;border-radius:1px"></div>
<div class="abs t" style="left:1048.40px;top:455px;font-size:6.5px;color:#5a5a5a;-webkit-text-stroke:0.05px;">67</div>
<svg style="left:1062.60px;top:455.90px" width="3.4" height="5.2" viewBox="0 0 6 10"><path d="M1 1L4.8 5L1 9" stroke="#555" stroke-width="1.3" fill="none"/></svg>
<div class="abs" style="left:1071.30px;top:450.00px;width:39.30px;height:16.30px;border:0.6px solid #e8e8e8;border-radius:2px;background:#fff"></div>
<div class="abs t" style="left:1076.20px;top:455px;font-size:6.5px;color:#5a5a5a;-webkit-text-stroke:0.05px;">10 条/页</div>
<svg style="left:1101.60px;top:456.80px" width="4.4" height="3" viewBox="0 0 10 6.5"><path d="M1 1L5 5.2L9 1" stroke="#c4c4c4" stroke-width="1.3" fill="none"/></svg>
<div class="abs t" style="left:1114.50px;top:455px;font-size:6.5px;color:#5a5a5a;-webkit-text-stroke:0.05px;">跳至</div>
<div class="abs" style="left:1130.80px;top:450.00px;width:20.00px;height:16.30px;border:0.6px solid #e8e8e8;border-radius:2px;background:#fff"></div>
<div class="abs t" style="left:1155.60px;top:455px;font-size:6.5px;color:#5a5a5a;-webkit-text-stroke:0.05px;">页</div>
<div class="abs" style="left:1186.60px;top:0.00px;width:13.40px;height:590.00px;background:#f2f1f1"></div>
<div class="abs" style="left:1188.00px;top:13.20px;width:10.90px;height:541.70px;background:#cdcdcd"></div>
<svg style="left:1189.80px;top:4.60px" width="7.4" height="4.6" viewBox="0 0 15 9"><path d="M1.2 8L7.5 1.6L13.8 8" stroke="#333" stroke-width="2.2" fill="none"/></svg>
</body></html>
